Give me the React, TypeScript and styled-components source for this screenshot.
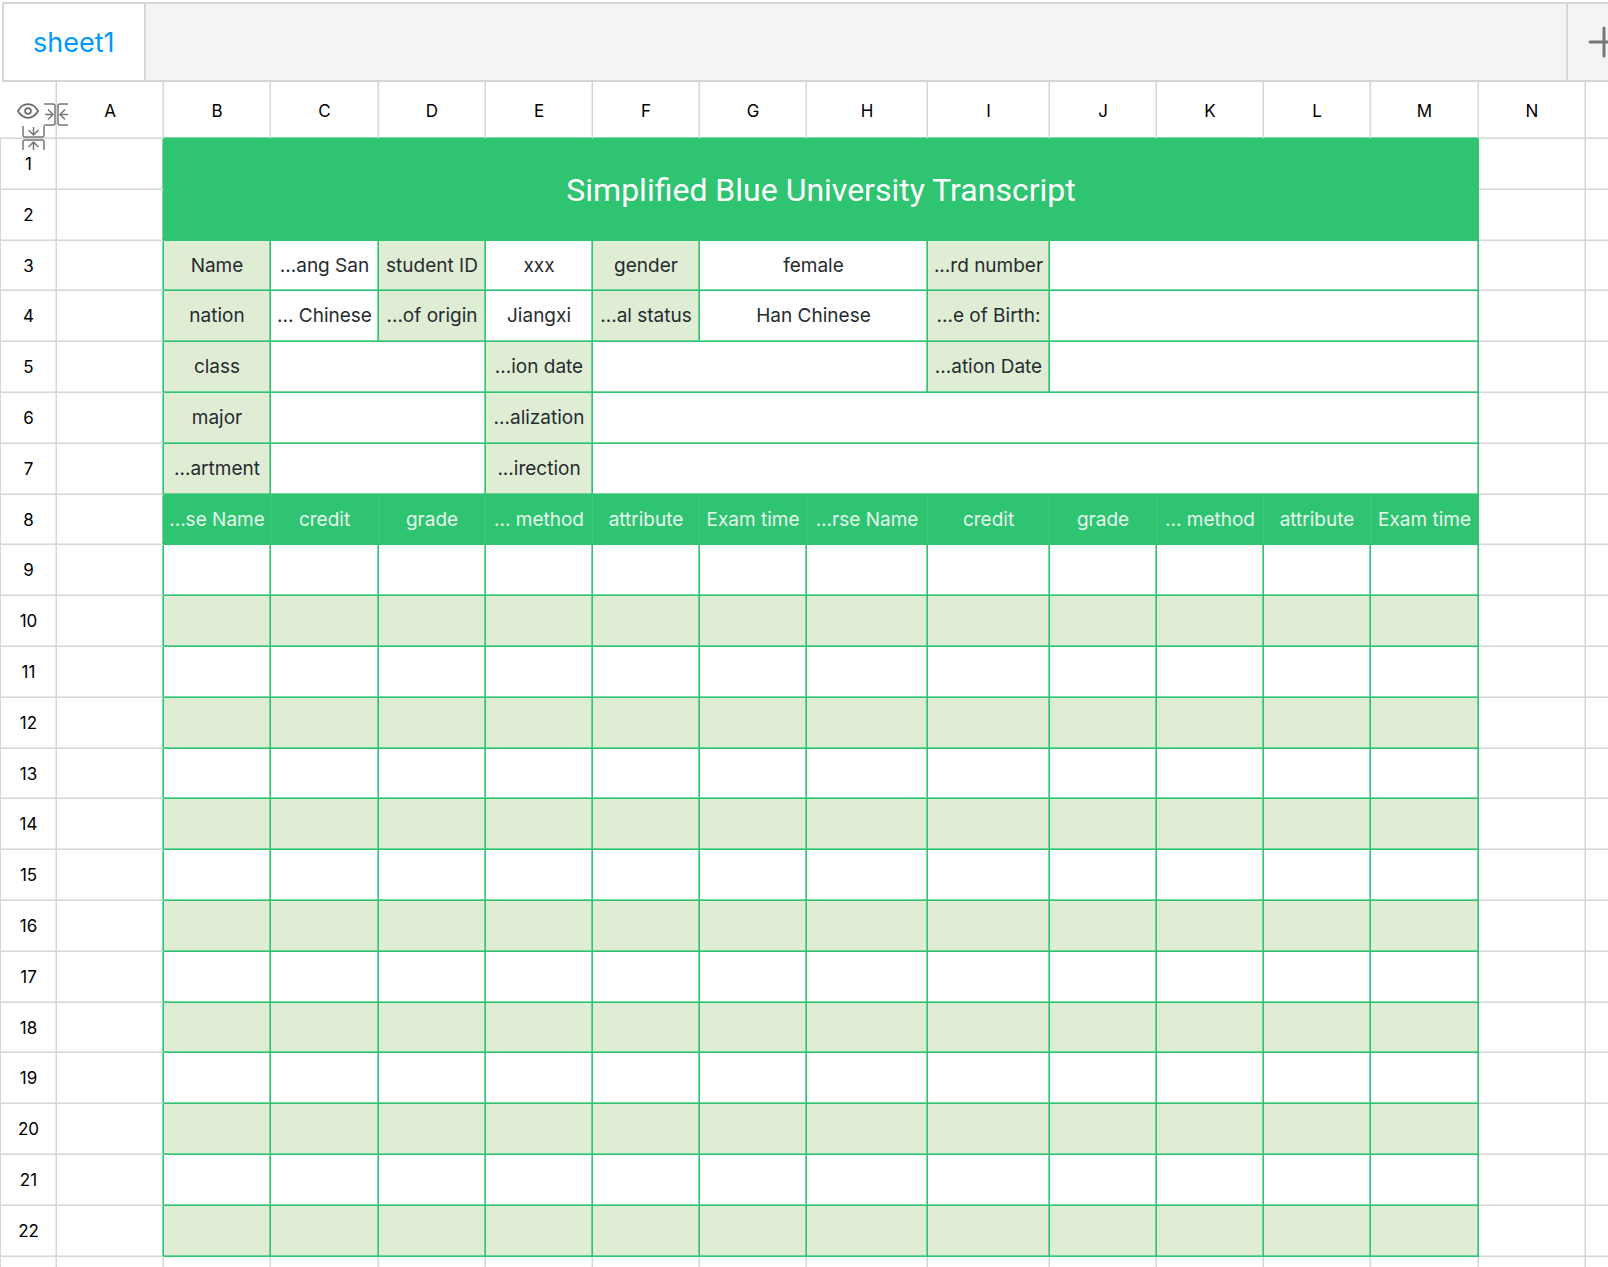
import React from 'react';
import styled, { createGlobalStyle } from 'styled-components';

const GRID = '#d6d6d6';
const GRID_SOFT = 'rgba(214, 214, 214, 0.5)';
const GREEN = '#2fc471';
const GREEN_SOFT = 'rgba(47, 196, 113, 0.65)';
const GREEN_EDGE = '#45c97f';
const PALE = '#e0edd5';

const GlobalStyle = createGlobalStyle`
  * { box-sizing: border-box; }
  body {
    margin: 0;
    background: #fff;
    font-family: Inter, "Liberation Sans", sans-serif;
  }
`;

const Page = styled.main`
  display: flex;
  flex-direction: column;
  height: 100vh;
  overflow: hidden;
`;

const TabBar = styled.nav`
  display: flex;
  flex: none;
  width: calc(100% + 32px);
  height: 80px;
  margin: 2px 0 0 2px;
  border: 2px solid ${GRID};
  background: #f4f4f4;
`;

const Tab = styled.button`
  padding: 2px 29px 0;
  border: 0;
  border-right: 2px solid ${GRID};
  background: #fff;
  color: #0098ff;
  font: 400 27px/36px Inter, "Liberation Sans", sans-serif;
`;

const AddButton = styled.button`
  display: grid;
  place-items: center;
  width: 74px;
  margin-left: auto;
  padding: 0;
  border: 0;
  border-left: 2px solid ${GRID};
  background: transparent;
`;

const Viewport = styled.section`
  position: relative;
  flex: 1;
  min-height: 0;
  overflow: hidden;
`;

const Sheet = styled.table`
  width: 1px;
  table-layout: fixed;
  border-collapse: separate;
  border-spacing: 0;
`;

const Col = styled.col<{ $w: number }>`
  width: ${p => p.$w}px;
`;

const Row = styled.tr<{ $h: number }>`
  height: ${p => p.$h}px;
`;

type Line = 'gray' | 'green' | 'edge';
const solid = { gray: GRID, green: GREEN, edge: GREEN_EDGE };
const soft = { gray: GRID_SOFT, green: GREEN_SOFT, edge: 'transparent' };

const Heading = styled.th<{ $bottom?: Line; $left?: boolean }>`
  padding: ${p => (p.$left ? '0' : '2px 0 0')};
  border: 0 solid ${GRID};
  border-width: 0 1px 1px ${p => (p.$left ? '1px' : '0')};
  border-bottom-color: ${p => solid[p.$bottom ?? 'gray']};
  box-shadow: inset -1px 0 ${GRID_SOFT}, inset 0 -1px ${p => soft[p.$bottom ?? 'gray']};
  color: #000;
  font-size: 17px;
  font-weight: 400;
  line-height: 24px;
  text-align: center;
`;

const Cell = styled.td<{ $fill: string; $ink: string; $title?: boolean; $right: Line; $bottom: Line }>`
  padding: 0;
  border: 0 solid;
  border-width: 0 1px 1px 0;
  border-right-color: ${p => solid[p.$right]};
  border-bottom-color: ${p => solid[p.$bottom]};
  box-shadow: inset -1px 0 ${p => soft[p.$right]}, inset 0 -1px ${p => soft[p.$bottom]};
  background: ${p => p.$fill};
  color: ${p => p.$ink};
  font-family: ${p => (p.$title ? 'Roboto, Inter, sans-serif' : 'inherit')};
  font-size: ${p => (p.$title ? 32 : 19)}px;
  line-height: 24px;
  text-align: center;
  white-space: nowrap;
`;

const ShowButton = styled.button`
  display: block;
  margin: 0 auto;
  padding: 0;
  border: 0;
  background: none;
  line-height: 0;
`;

const ResizeHandle = styled.button<{ $x: number; $y: number }>`
  position: absolute;
  left: ${p => p.$x}px;
  top: ${p => p.$y}px;
  padding: 0;
  border: 0;
  background: none;
  line-height: 0;
`;

const columns = [
  { name: 'A', w: 107 }, { name: 'B', w: 107 }, { name: 'C', w: 108 }, { name: 'D', w: 107 },
  { name: 'E', w: 107 }, { name: 'F', w: 107 }, { name: 'G', w: 107 }, { name: 'H', w: 121 },
  { name: 'I', w: 122 }, { name: 'J', w: 107 }, { name: 'K', w: 107 }, { name: 'L', w: 107 },
  { name: 'M', w: 108 }, { name: 'N', w: 107 }, { name: '', w: 107 },
];

type Item = { text?: string; span?: number; rows?: number; kind?: 'label' | 'value' | 'head' | 'title' };

const label = (text: string): Item => ({ text, kind: 'label' });
const value = (text = '', span = 1): Item => ({ text, span, kind: 'value' });

const details: Item[][] = [
  [{ text: 'Simplified Blue University Transcript', span: 12, rows: 2, kind: 'title' }],
  [],
  [label('Name'), value('...ang San'), label('student ID'), value('xxx'), label('gender'), value('female', 2), label('...rd number'), value('', 4)],
  [label('nation'), value('... Chinese'), label('...of origin'), value('Jiangxi'), label('...al status'), value('Han Chinese', 2), label('...e of Birth:'), value('', 4)],
  [label('class'), value('', 2), label('...ion date'), value('', 3), label('...ation Date'), value('', 4)],
  [label('major'), value('', 2), label('...alization'), value('', 8)],
  [label('...artment'), value('', 2), label('...irection'), value('', 8)],
  ['...se Name', 'credit', 'grade', '... method', 'attribute', 'Exam time', '...rse Name', 'credit', 'grade', '... method', 'attribute', 'Exam time']
    .map(text => ({ text, kind: 'head' as const })),
];

const rowItems = (n: number): Item[] =>
  details[n - 1] ?? Array.from({ length: 12 }, () => ({ kind: n % 2 ? 'value' : 'label' }));

const fills = { label: PALE, value: '#fff', head: GREEN, title: GREEN };
const inks = { label: '#262b30', value: '#262b30', head: '#e6f7ed', title: '#fff' };

const Blank = ({ right = 'gray' }: { right?: Line }) => (
  <Cell $fill="#fff" $ink="#000" $right={right} $bottom="gray" />
);

const CollapseArrows = () => (
  <g fill="none" stroke="#777" strokeWidth="1.5">
    <path d="M0 1H9Q11 1 11 3V20Q11 22 9 22H0M1 11.500H9M4 6.500L9 11.500L4 16.500" />
    <path d="M24 1H16Q14 1 14 3V20Q14 22 16 22H24M24 11.500H16M21 6.500L16 11.500L21 16.500" />
  </g>
);

const LAST_ROW = 22;

export default function App() {
  return (
    <Page>
      <GlobalStyle />
      <TabBar aria-label="Sheets">
        <Tab type="button">sheet1</Tab>
        <AddButton type="button" aria-label="Add sheet">
          <svg width="32" height="32" viewBox="0 0 32 32" fill="none" stroke="#777" strokeWidth="3" strokeLinecap="round">
            <path d="M2 16H30M16 2V30" />
          </svg>
        </AddButton>
      </TabBar>
      <Viewport>
        <Sheet>
          <colgroup>
            <Col $w={57} />
            {columns.map((c, i) => <Col key={i} $w={c.w} />)}
          </colgroup>
          <thead>
            <Row $h={57}>
              <Heading>
                <ShowButton type="button" aria-label="Show or hide headings">
                  <svg width="22" height="16" viewBox="0 0 22 16" fill="none" stroke="#6b6b6b" strokeWidth="1.700">
                    <path d="M0.900 8C3.500 3.500 7 1.200 11 1.200S18.500 3.500 21.100 8C18.500 12.500 15 14.800 11 14.800S3.500 12.500 0.900 8Z" />
                    <circle cx="11" cy="8" r="2.900" />
                  </svg>
                </ShowButton>
              </Heading>
              {columns.map((c, i) => (
                <Heading key={i} scope="col" $bottom={i > 0 && i < 13 ? 'green' : 'gray'}>{c.name}</Heading>
              ))}
            </Row>
          </thead>
          <tbody>
            {Array.from({ length: LAST_ROW }, (_, i) => i + 1).map(n => {
              const items = rowItems(n);
              return (
                <Row key={n} $h={n % 5 === 3 ? 50 : 51}>
                  <Heading scope="row" $left>{n}</Heading>
                  <Blank right="green" />
                  {items.map((item, i) => {
                    const kind = item.kind ?? 'value';
                    return (
                      <Cell
                        key={i}
                        colSpan={item.span}
                        rowSpan={item.rows}
                        $fill={fills[kind]}
                        $ink={inks[kind]}
                        $title={kind === 'title'}
                        $right={kind === 'head' && i < items.length - 1 ? 'edge' : 'green'}
                        $bottom="green"
                      >
                        {item.text}
                      </Cell>
                    );
                  })}
                  <Blank />
                  <Blank />
                </Row>
              );
            })}
            <Row $h={51}>
              <Heading $left />
              {columns.map((_, i) => <Blank key={i} />)}
            </Row>
          </tbody>
        </Sheet>
        <ResizeHandle type="button" aria-label="Collapse columns" $x={44} $y={21}>
          <svg width="24" height="23" viewBox="0 0 24 23"><CollapseArrows /></svg>
        </ResizeHandle>
        <ResizeHandle type="button" aria-label="Collapse rows" $x={22} $y={44}>
          <svg width="23" height="24" viewBox="0 0 23 24">
            <g transform="matrix(0 1 1 0 0 0)"><CollapseArrows /></g>
          </svg>
        </ResizeHandle>
      </Viewport>
    </Page>
  );
}
